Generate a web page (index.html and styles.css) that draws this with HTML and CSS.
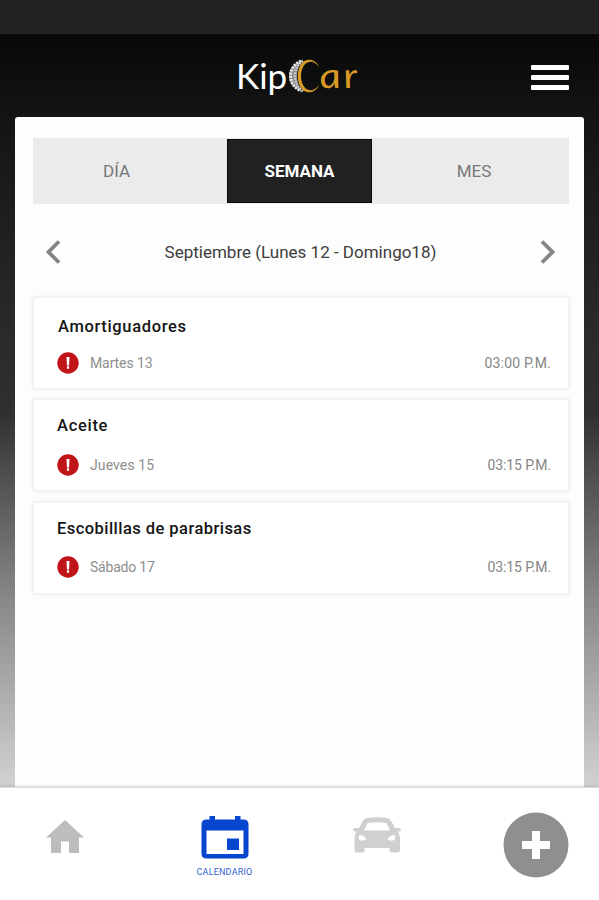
FILE: index.html
```html
<!DOCTYPE html>
<html lang="es">
<head>
  <meta charset="UTF-8">
  <title>KipCar - Calendario</title>
  <link rel="stylesheet" href="styles.css">
</head>
<body>

  <div class="status"></div>

  <header class="header">
    <div class="logo">
      <span class="kip">Kip</span>
      <svg class="wheel" width="33" height="36" viewBox="0 0 33 36">
        <path d="M15 1.500 Q1 7 1 18 Q1 29 15 34.500 Q9 27 9 18 Q9 9 15 1.500Z" fill="#8d8d8d"/>
        <path d="M13 3 Q2.500 8 2.500 18 Q2.500 28 13 33" fill="none" stroke="#e8e8e8" stroke-width="3" stroke-dasharray="2 1.200"/>
        <path d="M15 3 Q7 9 7 18 Q7 27 15 33" fill="none" stroke="#d0d0d0" stroke-width="2.400" stroke-dasharray="1.600 1.200"/>
        <path d="M31 9.500 C28 .5 18 -.5 13.500 5.500 C8.500 12 8.500 24 13.500 30.500 C18 36.500 28 35.500 31 26.500 C27 33.500 20 34 16 28.500 C12 23 12 13 16 7.500 C20 2 27 2.500 31 9.500Z" fill="#d99b25"/>
      </svg>
      <span class="ar">ar</span>
    </div>
    <div class="menu">
      <i></i>
      <i></i>
      <i></i>
    </div>
  </header>

  <main class="panel">
    <div class="tabs">
      <div class="tab day"><span>DÍA</span></div>
      <div class="tab week active"><span>SEMANA</span></div>
      <div class="tab month"><span>MES</span></div>
    </div>

    <div class="range">
      <svg width="16" height="24" viewBox="0 0 16 24"><path d="M14 1.500 L3.500 12 L14 22.500"/></svg>
      <span>Septiembre (Lunes 12 - Domingo18)</span>
      <svg width="16" height="24" viewBox="0 0 16 24"><path d="M2 1.500 L12.500 12 L2 22.500"/></svg>
    </div>

    <!-- eventos -->
    <div class="list">
      <div class="card first">
        <h3 class="t1">Amortiguadores</h3>
        <div class="row">
          <svg width="22" height="22" viewBox="0 0 22 22"><circle cx="11" cy="11" r="10.700"/><path d="M9.500 5h3l-.4 8.500h-2.200zM9.900 14.200h2.200v2.500h-2.200z"/></svg>
          <span class="date d1">Martes 13</span>
          <span class="time">03:00 P.M.</span>
        </div>
      </div>
      <div class="card second">
        <h3 class="t2">Aceite</h3>
        <div class="row">
          <svg width="22" height="22" viewBox="0 0 22 22"><circle cx="11" cy="11" r="10.700"/><path d="M9.500 5h3l-.4 8.500h-2.200zM9.900 14.200h2.200v2.500h-2.200z"/></svg>
          <span class="date d2">Jueves 15</span>
          <span class="time narrow">03:15 P.M.</span>
        </div>
      </div>
      <div class="card third">
        <h3 class="t3">Escobilllas de parabrisas</h3>
        <div class="row">
          <svg width="22" height="22" viewBox="0 0 22 22"><circle cx="11" cy="11" r="10.700"/><path d="M9.500 5h3l-.4 8.500h-2.200zM9.900 14.200h2.200v2.500h-2.200z"/></svg>
          <span class="date d3">Sábado 17</span>
          <span class="time narrow">03:15 P.M.</span>
        </div>
      </div>
    </div>
  </main>

  <nav class="nav">
    <div class="item home">
      <svg width="38" height="33" viewBox="0 0 38 33">
        <path d="M19 0L38 17.500H33V33H23V21.500H15V33H5V17.500H0Z" fill="#bdbdbd"/>
      </svg>
    </div>
    <div class="item calendar">
      <svg width="48" height="43" viewBox="0 0 48 43">
        <path fill="#0747cf" fill-rule="evenodd" d="M8.500 0H14V3.500H34V0H39.500V3.500H42.500Q47.500 3.500 47.500 8.500V37.500Q47.500 42.500 42.500 42.500H5.500Q.5 42.500 .5 37.500V8.500Q.5 3.500 5.500 3.500H8.500ZM5.500 14.500V38H42.500V14.500ZM26 22.500H38V34H26Z"/>
      </svg>
      <span>CALENDARIO</span>
    </div>
    <div class="item car">
      <svg width="48" height="36" viewBox="0 0 48 36">
        <path fill="#d0d0d0" fill-rule="evenodd" d="M14 1Q24-.5 34 1Q37 1.500 38.500 4.500L42 11H46Q48 11 48 13Q48 14.500 46 14.500H44.500Q47 17 47 21V33Q47 35.500 44.500 35.500H39Q36.500 35.500 36.500 33V31H11.500V33Q11.500 35.500 9 35.500H4Q1.500 35.500 1.500 33V21Q1.500 17 3.500 14.500H2Q0 14.500 0 13Q0 11 2 11H6L9.500 4.500Q11 1.500 14 1ZM14.500 6L11 13.500H37L33.500 6Q24 4.500 14.500 6ZM6.500 18Q5 20 6.500 23Q10 24.500 13.500 22.500Q12 18.500 6.500 18ZM41.500 18Q36 18.500 34.500 22.500Q38 24.500 41.500 23Q43 20 41.500 18Z"/>
      </svg>
    </div>
    <div class="item add">
      <svg width="66" height="66" viewBox="0 0 66 66">
        <circle cx="33" cy="33" r="32.500" fill="#8f8f8f"/>
        <path d="M33 19V47M19 33H47" fill="none" stroke="#fff" stroke-width="8" stroke-linecap="butt"/>
      </svg>
    </div>
  </nav>

</body>
</html>
```

FILE: styles.css
```css
*{
  box-sizing: border-box;
}

body{
  margin: 0;
  height: 900px;
  overflow: hidden;
  display: flex;
  flex-direction: column;
  font-family: Roboto, "Liberation Sans", sans-serif;
  background: linear-gradient(#080808 34px, #141414 120px, #282828 310px, #303030 415px, #484848 460px, #888888 600px, #d2d2d2 787px);
}

.status{
  height: 34px;
  background: #222;
}

.header{
  height: 83px;
  display: flex;
  justify-content: space-between;
  padding: 0 30px 0 236px;
}

.logo{
  display: flex;
  padding-top: 24px;
  font-family: Lato, sans-serif;
  font-size: 35px;
  line-height: 34px;
  color: #fff;
}

.kip{
  width: 52px;
}

/* cursiva enderezada, para la "a" redonda */
.ar{
  color: #d99b25;
  font-style: italic;
  letter-spacing: 2px;
  line-height: 33px;
  transform: scaleX(1.2) skewX(8deg);
  transform-origin: left;
}

.menu{
  padding-top: 31px;
}

.menu i{
  display: block;
  width: 38px;
  height: 5px;
  margin-bottom: 5px;
  border-radius: 1px;
  background: #fff;
}

.panel{
  flex: 1;
  margin: 0 15px;
  padding: 21px 14px 0 17px;
  background: #fdfdfd;
  border-radius: 3px 3px 0 0;
}

.tabs{
  display: flex;
  height: 66px;
  margin: 0 1px;
  background: #ebebeb;
}

.tab{
  display: flex;
  align-items: center;
  justify-content: center;
  font-size: 17px;
  color: #777;
}

.day{
  width: 194px;
  padding-right: 27px;
}

.week{
  width: 145px;
  margin: 1px 0;
}

.month{
  flex: 1;
  padding-left: 7px;
}

.active{
  background: #212121;
  border: 1px solid #0a0a0a;
  color: #fff;
  font-weight: 700;
}

.range{
  display: flex;
  align-items: center;
  justify-content: space-between;
  height: 93px;
  padding: 2px 14px 0 13px;
  font-size: 17px;
  color: #3c3c3c;
}

.range path{
  fill: none;
  stroke: #858585;
  stroke-width: 3.8;
}

.card{
  height: 92px;
  margin: 0 1px 10px;
  padding: 19px 17px 0 24px;
  background: #fff;
  border: 1px solid #f3f3f3;
  box-shadow: 0 0 3px rgba(0,0,0,0.12);
}

.second,
.third{
  padding-top: 16px;
}

.third{
  margin-top: 11px;
}

.card h3{
  margin: 0;
  font-size: 16.5px;
  line-height: 20px;
  font-weight: 500;
  color: #141414;
}

.t1{
  letter-spacing: .65px;
}

.card .t2,
.card .t3{
  margin-left: -1px;
}

.t2{
  letter-spacing: .7px;
}

.t3{
  letter-spacing: .45px;
}

.row{
  display: flex;
  align-items: center;
  height: 22px;
  margin-top: 15px;
  font-size: 14px;
  color: #8e8e8e;
}

.second .row{
  margin-top: 18px;
}

.third .row{
  margin-top: 17px;
}

.row svg{
  margin-right: 11px;
  margin-left: -1px;
}

.row circle{
  fill: #c01518;
}

.row path{
  fill: #fff;
}

.d1{
  letter-spacing: -.1px;
}

.d2{
  letter-spacing: .1px;
}

.d3{
  letter-spacing: -.2px;
}

.time{
  margin-left: auto;
  color: #858585;
  letter-spacing: .2px;
}

.narrow{
  letter-spacing: -.1px;
}

.nav{
  display: flex;
  height: 113px;
  background: #fff;
  border-top: 1px solid #dcdcdc;
  box-shadow: 0 -1px 3px rgba(0,0,0,0.15);
}

.home{
  padding: 32px 0 0 46px;
  width: 196px;
}

.calendar{
  width: 57px;
  padding-top: 28px;
  display: flex;
  flex-direction: column;
  align-items: center;
}

.calendar span{
  margin-top: 7px;
  font-size: 9px;
  line-height: 12px;
  letter-spacing: .2px;
  color: #3563d0;
}

.car{
  padding: 29px 0 0 100px;
  width: 250px;
}

.add{
  padding-top: 24px;
}
```
